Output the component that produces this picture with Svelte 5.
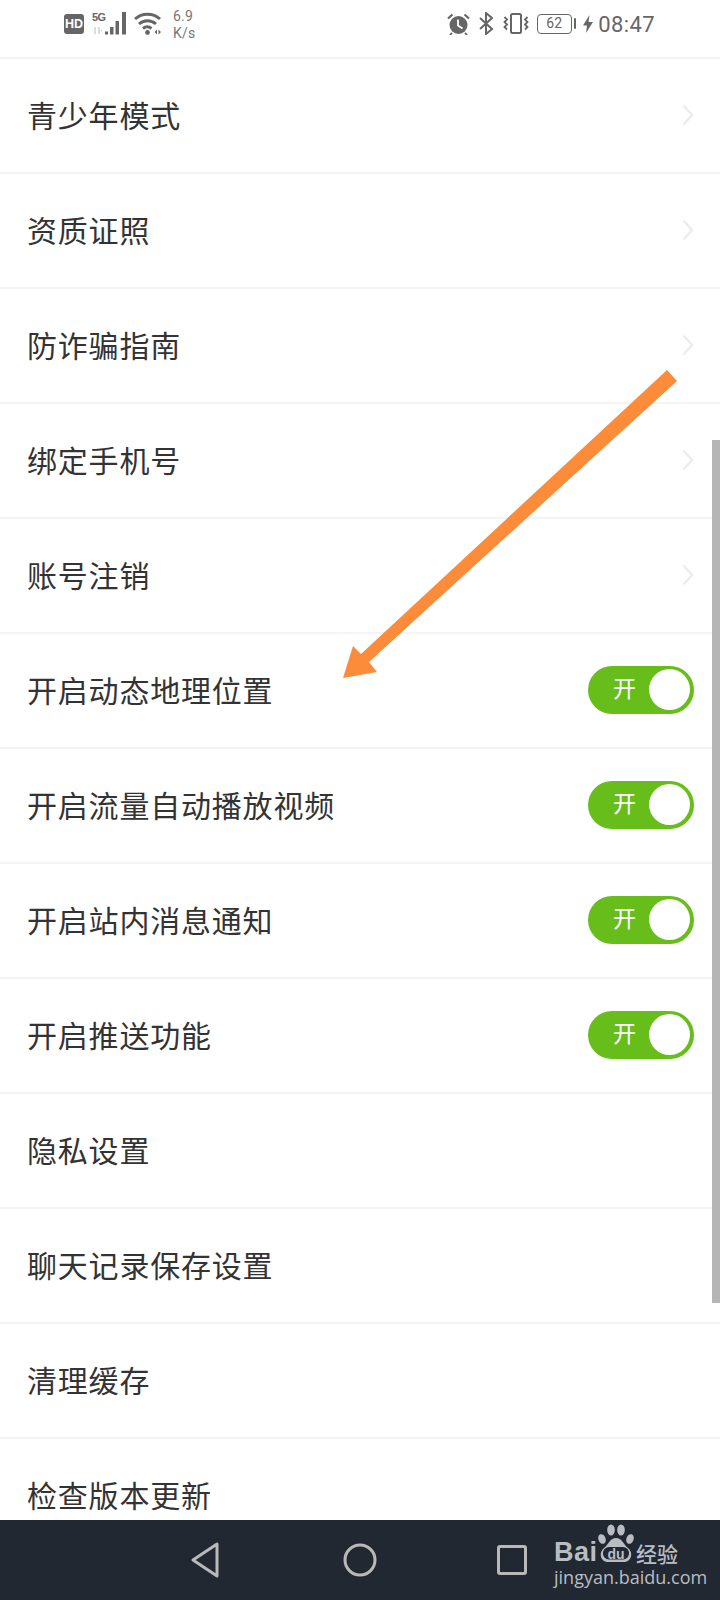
<script>
  const rows = [
    { label: '青少年模式', chevron: true },
    { label: '资质证照', chevron: true },
    { label: '防诈骗指南', chevron: true },
    { label: '绑定手机号', chevron: true },
    { label: '账号注销', chevron: true },
    { label: '开启动态地理位置', toggle: true },
    { label: '开启流量自动播放视频', toggle: true },
    { label: '开启站内消息通知', toggle: true },
    { label: '开启推送功能', toggle: true },
    { label: '隐私设置' },
    { label: '聊天记录保存设置' },
    { label: '清理缓存' },
    { label: '检查版本更新' }
  ];
</script>

<div class="page">
  <header class="status">
    <div class="side">
      <span class="hd">HD</span>
      <div class="sigwrap">
        <span class="fiveg">5G</span>
        <svg width="35" height="24" viewBox="0 0 35 24">
          <path d="M3 15v7M7 15v7M10 18l-1 1" stroke="#d8d8d8" stroke-width="1.800" fill="none" />
          <rect x="13" y="19.500" width="3" height="3" fill="#666" />
          <rect x="18" y="15" width="3.500" height="7.500" fill="#666" />
          <rect x="23.500" y="9" width="3.500" height="13.500" fill="#666" />
          <rect x="30" y="0" width="4" height="22.500" fill="#666" />
        </svg>
      </div>
      <svg class="wifi" width="28" height="24" viewBox="0 0 28 24" fill="none" stroke="#666" stroke-width="3">
        <path d="M1 7C8 0.500 19 0.500 26 7" />
        <path d="M5 12C10 7.500 17 7.500 22 12" />
        <path d="M9 16.500C11.500 14.500 15 14.500 17.500 16.500" />
        <circle cx="13.500" cy="20.500" r="2.400" fill="#666" stroke="none" />
        <path d="M20.500 20l2.500-2.500v5zM24.500 17.500l2.500 2.500-2.500 2.500z" fill="#666" stroke="none" />
      </svg>
      <span class="speed">6.9<br />K/s</span>
    </div>
    <div class="side">
      <svg class="ico" width="23" height="22" viewBox="0 0 23 22">
        <circle cx="11.500" cy="12" r="9" fill="#666" />
        <path d="M11 6.500V12.500L15.500 15.500" fill="none" stroke="#fff" stroke-width="1.800" />
        <path d="M1 5.500L5.500 1.500M22 5.500L17.500 1.500" stroke="#666" stroke-width="2.200" />
        <path d="M5 20l-2 2M18 20l2 2" stroke="#666" stroke-width="1.800" />
      </svg>
      <svg class="ico bt" width="14" height="23" viewBox="0 0 14 23" fill="none" stroke="#666" stroke-width="2">
        <path d="M1 6L13 17L7 22V1L13 6L1 17" />
      </svg>
      <svg class="ico vib" width="26" height="21" viewBox="0 0 26 21" fill="none" stroke="#666" stroke-width="1.800">
        <rect x="8" y="1" width="10" height="19" rx="1.500" stroke-width="2" />
        <path d="M1.500 4l2.500 2.500-2.500 2.500 2.500 2.500-2.500 2.500 2.500 2.500M24.500 4l-2.500 2.500 2.500 2.500-2.500 2.500 2.500 2.500-2.500 2.500" />
      </svg>
      <span class="battery">62</span>
      <span class="nub"></span>
      <svg class="ico bolt" width="10" height="18" viewBox="0 0 10 18">
        <path d="M6.500 0L0 10.500H4L3 18L10 7H5.500Z" fill="#666" />
      </svg>
      <span class="time">08:47</span>
    </div>
  </header>

  <main class="list">
    {#each rows as row}
      <div class="row">
        <span class="label">{row.label}</span>
        {#if row.chevron}
          <svg class="chev" width="12" height="22" viewBox="0 0 12 22" fill="none" stroke="#ececec" stroke-width="2.400">
            <path d="M1.500 1.500L10 11L1.500 20.500" />
          </svg>
        {/if}
        {#if row.toggle}
          <div class="toggle"><span class="on">开</span><span class="knob"></span></div>
        {/if}
      </div>
    {/each}
  </main>

  <nav class="nav">
    <svg width="28" height="36" viewBox="0 0 28 36" fill="none" stroke="#b9b9b9" stroke-width="3" stroke-linejoin="round">
      <path d="M26 2V34L2 18Z" />
    </svg>
    <svg width="34" height="34" viewBox="0 0 34 34" fill="none" stroke="#b9b9b9" stroke-width="3">
      <circle cx="17" cy="17" r="15" />
    </svg>
    <svg width="30" height="30" viewBox="0 0 30 30" fill="none" stroke="#b9b9b9" stroke-width="3" stroke-linejoin="round">
      <rect x="1.500" y="1.500" width="27" height="27" rx="1.500" />
    </svg>
  </nav>

  <div class="scrollbar"></div>

  <svg class="arrow" width="720" height="1600" viewBox="0 0 720 1600">
    <path d="M667 370L677 381L369 662L377 672L343 678L353 646L361 654Z" fill="#fc8b3a" />
  </svg>

  <div class="logo">
    <svg class="paw" width="36" height="42" viewBox="0 0 36 42">
      <g fill="#b9bdc3">
        <ellipse cx="4" cy="15" rx="3.600" ry="5" transform="rotate(-20 4 15)" />
        <ellipse cx="13" cy="6" rx="3.800" ry="5.500" />
        <ellipse cx="23" cy="6" rx="3.800" ry="5.500" />
        <ellipse cx="32" cy="15" rx="3.600" ry="5" transform="rotate(20 32 15)" />
        <path d="M18 14C24 14 25 20 30 24C36 29 33 38 26 38H10C3 38 0 29 6 24C11 20 12 14 18 14Z" />
      </g>
      <rect x="5" y="23" width="26" height="12.500" rx="6" fill="#212832" />
    </svg>
    <span class="bai">Bai</span>
    <span class="du">du</span>
    <span class="jy">经验</span>
    <div class="url">jingyan.baidu.com</div>
  </div>
</div>

<style>
  :global(body) { margin: 0; background: #fff; }
  .page {
    position: relative;
    width: 720px;
    height: 1600px;
    overflow: hidden;
    display: flex;
    flex-direction: column;
    background: #fff;
    font-family: "Noto Sans CJK SC", "Noto Sans", sans-serif;
  }
  .status {
    flex: 0 0 57px;
    display: flex;
    justify-content: space-between;
    align-items: center;
    padding: 0 65px 10px 64px;
    box-sizing: border-box;
    color: #666;
  }
  .side { display: flex; align-items: center; }
  .hd {
    width: 20px;
    height: 20px;
    border-radius: 3px;
    background: #666;
    color: #fff;
    font: 700 12.500px/20px "Liberation Sans", sans-serif;
    text-align: center;
  }
  .sigwrap { position: relative; width: 35px; height: 24px; margin-left: 8px; }
  .sigwrap svg { display: block; }
  .fiveg {
    position: absolute;
    left: 0;
    top: -1px;
    font: 700 11px/12px "Liberation Sans", sans-serif;
    letter-spacing: -0.6px;
    color: #666;
  }
  .wifi { margin-left: 7px; }
  .speed {
    margin: 2px 0 0 11px;
    font: 14px/17px Roboto, sans-serif;
    color: #777;
    letter-spacing: 0.2px;
  }
  .bt { margin-left: 9px; }
  .vib { margin-left: 10px; }
  .battery {
    margin-left: 8px;
    width: 35px;
    height: 20px;
    box-sizing: border-box;
    border: 1.500px solid #666;
    border-radius: 4px;
    font: 14px/17px Roboto, sans-serif;
    text-align: center;
    color: #666;
  }
  .nub {
    width: 2.500px;
    height: 11px;
    margin-left: 2px;
    background: #666;
    border-radius: 1px;
  }
  .bolt { margin-left: 7px; }
  .time {
    margin: 2px 0 0 5px;
    font: 22px/24px Roboto, sans-serif;
    color: #666;
    letter-spacing: 0.4px;
  }
  .list { flex: 1; min-height: 0; overflow: hidden; border-top: 2px solid #f4f4f4; }
  .row {
    height: 115px;
    box-sizing: border-box;
    border-bottom: 2px solid #f4f4f4;
    padding: 0 26px 0 27px;
    display: flex;
    align-items: center;
    justify-content: space-between;
  }
  .label {
    margin-bottom: 4px;
    font-size: 30px;
    line-height: 40px;
    letter-spacing: 0.8px;
    color: #333;
  }
  .chev { margin-bottom: 2px; }
  .toggle {
    margin-bottom: 2px;
    width: 106px;
    height: 48px;
    border-radius: 24px;
    background: #67bd1a;
    display: flex;
    align-items: center;
    justify-content: space-between;
    padding: 0 4px 0 25px;
    box-sizing: border-box;
  }
  .on { margin-bottom: 6px; color: #fff; font-size: 23px; line-height: 28px; }
  .knob { width: 41px; height: 41px; border-radius: 50%; background: #fff; }
  .nav {
    flex: 0 0 80px;
    background: #212832;
    display: flex;
    align-items: center;
    padding: 0 0 0 191px;
    box-sizing: border-box;
  }
  .nav svg:nth-child(2) { margin-left: 124px; }
  .nav svg:nth-child(3) { margin-left: 120px; }
  .scrollbar {
    position: absolute;
    right: 0;
    top: 440px;
    width: 8px;
    height: 863px;
    background: #b5b5b5;
  }
  .arrow { position: absolute; left: 0; top: 0; pointer-events: none; }
  .logo {
    position: absolute;
    left: 552px;
    top: 1522px;
    width: 130px;
    height: 64px;
    color: #b9bdc3;
  }
  .paw { position: absolute; left: 46px; top: 2px; }
  .bai {
    position: absolute;
    left: 2px;
    top: 15px;
    font: 700 27px/30px "Liberation Sans", sans-serif;
    letter-spacing: 0.5px;
  }
  .du {
    position: absolute;
    left: 51px;
    top: 25px;
    width: 26px;
    text-align: center;
    font: 700 14px/14px "Liberation Sans", sans-serif;
  }
  .jy {
    position: absolute;
    left: 84px;
    top: 18px;
    font-size: 21px;
    line-height: 26px;
    font-weight: 500;
    white-space: nowrap;
  }
  .url {
    position: absolute;
    left: 2px;
    top: 45px;
    font: 18px/20px "Open Sans", sans-serif;
    white-space: nowrap;
  }
</style>
